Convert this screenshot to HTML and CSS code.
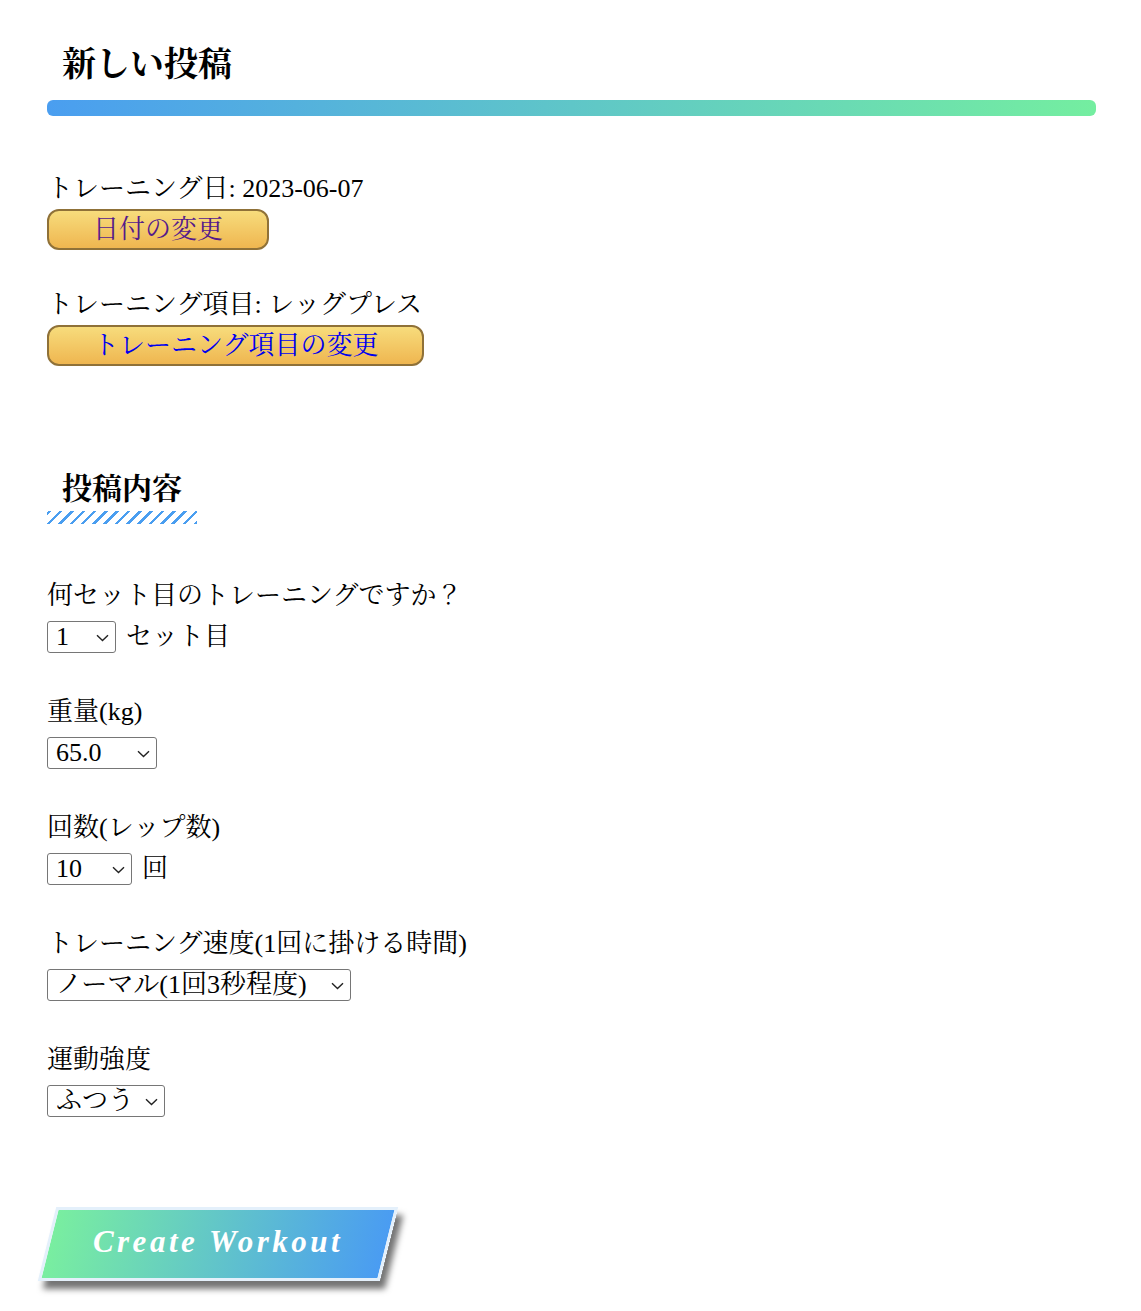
FILE: index.html
```html
<!DOCTYPE html>
<html lang="ja">
<head>
<meta charset="utf-8">
<title>新しい投稿</title>
<link rel="stylesheet" href="styles.css">
</head>
<body>
<main class="page">
  <h1 class="title">新しい投稿</h1>
  <div class="title-bar"></div>

  <section class="info">
    <div class="info-item">
      <div class="info-label">トレーニング日: 2023-06-07</div>
      <a class="pill pill-visited" href="#">日付の変更</a>
    </div>
    <div class="info-item">
      <div class="info-label">トレーニング項目: レッグプレス</div>
      <a class="pill pill-link" href="#">トレーニング項目の変更</a>
    </div>
  </section>

  <h2 class="subtitle">投稿内容</h2>
  <div class="stripes"></div>

  <form class="form">
    <div class="group">
      <div class="label">何セット目のトレーニングですか？</div>
      <div class="row">
        <span class="sel-wrap">
          <select class="sel sel-set"><option>1</option></select>
          <svg class="chev" width="13" height="8" viewBox="0 0 13 8"><path d="M1 1.2 L6.5 6.5 L12 1.2" fill="none" stroke="#222" stroke-width="1.4"/></svg>
        </span>
        <span class="unit">セット目</span>
      </div>
    </div>
    <div class="group">
      <div class="label">重量(kg)</div>
      <div class="row">
        <span class="sel-wrap">
          <select class="sel sel-weight"><option>65.0</option></select>
          <svg class="chev" width="13" height="8" viewBox="0 0 13 8"><path d="M1 1.2 L6.5 6.5 L12 1.2" fill="none" stroke="#222" stroke-width="1.4"/></svg>
        </span>
      </div>
    </div>
    <div class="group">
      <div class="label">回数(レップ数)</div>
      <div class="row">
        <span class="sel-wrap">
          <select class="sel sel-reps"><option>10</option></select>
          <svg class="chev" width="13" height="8" viewBox="0 0 13 8"><path d="M1 1.2 L6.5 6.5 L12 1.2" fill="none" stroke="#222" stroke-width="1.4"/></svg>
        </span>
        <span class="unit">回</span>
      </div>
    </div>
    <div class="group">
      <div class="label">トレーニング速度(1回に掛ける時間)</div>
      <div class="row">
        <span class="sel-wrap">
          <select class="sel sel-speed"><option>ノーマル(1回3秒程度)</option></select>
          <svg class="chev" width="13" height="8" viewBox="0 0 13 8"><path d="M1 1.2 L6.5 6.5 L12 1.2" fill="none" stroke="#222" stroke-width="1.4"/></svg>
        </span>
      </div>
    </div>
    <div class="group">
      <div class="label">運動強度</div>
      <div class="row">
        <span class="sel-wrap">
          <select class="sel sel-intensity"><option>ふつう</option></select>
          <svg class="chev" width="13" height="8" viewBox="0 0 13 8"><path d="M1 1.2 L6.5 6.5 L12 1.2" fill="none" stroke="#222" stroke-width="1.4"/></svg>
        </span>
      </div>
    </div>

    <button type="button" class="create"><span class="create-text">Create Workout</span></button>
  </form>
</main>
</body>
</html>
```
FILE: styles.css
```css
html, body {
  margin: 0;
  padding: 0;
  background: #ffffff;
}

body {
  font-family: "Liberation Serif", "Noto Serif CJK JP", "Noto Sans CJK JP", serif;
  color: #000;
}

.page {
  padding: 45px 45px 40px 47px;
  display: flex;
  flex-direction: column;
  align-items: flex-start;
}

.title {
  margin: 0;
  padding-left: 15px;
  font-size: 34px;
  line-height: 40px;
  font-weight: bold;
}

.title-bar {
  align-self: stretch;
  margin-top: 15px;
  height: 16px;
  border-radius: 6px;
  background: linear-gradient(to right, #4a9ef0, #74eea0);
}

.info {
  margin-top: 58px;
  display: flex;
  flex-direction: column;
  gap: 40px;
}

.info-item {
  display: flex;
  flex-direction: column;
  align-items: flex-start;
  gap: 5px;
}

.info-label {
  font-size: 26px;
  line-height: 30px;
}

.pill {
  display: inline-block;
  box-sizing: border-box;
  height: 41px;
  line-height: 37px;
  padding: 0 44px 0 44px;
  font-size: 26px;
  text-decoration: none;
  border: 2px solid #8f7138;
  border-radius: 12px;
  background: linear-gradient(to bottom, #f7dc7c, #efb650);
}

.pill-visited { color: #551a8b; }
.pill-link { color: #0000ee; }

.subtitle {
  margin: 105px 0 0;
  padding-left: 15px;
  font-size: 30px;
  line-height: 36px;
  font-weight: bold;
}

.stripes {
  margin-top: 4px;
  width: 150px;
  height: 13px;
  background: repeating-linear-gradient(-45deg, #4a9ef0 0 2.5px, transparent 2.5px 8px);
}

.form {
  margin-top: 57px;
  display: flex;
  flex-direction: column;
  align-items: flex-start;
}

.group {
  display: flex;
  flex-direction: column;
  align-items: flex-start;
  gap: 10px;
  margin-bottom: 44px;
}

.label {
  font-size: 26px;
  line-height: 30px;
}

.row {
  display: flex;
  align-items: center;
  gap: 10px;
  height: 32px;
}

.unit {
  font-size: 26px;
  line-height: 30px;
}

.sel-wrap {
  position: relative;
  display: inline-block;
  height: 32px;
}

.sel {
  -webkit-appearance: none;
  appearance: none;
  box-sizing: border-box;
  font-family: "Liberation Serif", "Noto Serif CJK JP", serif;
  font-size: 26px;
  line-height: 30px;
  height: 32px;
  padding: 0 0 0 8px;
  border: 1px solid #767676;
  border-radius: 3px;
  background-color: #fff;
  color: #000;
  display: block;
}

.sel-set { width: 69px; }
.sel-weight { width: 110px; }
.sel-reps { width: 85px; }
.sel-speed { width: 304px; }
.sel-intensity { width: 118px; }

.chev {
  position: absolute;
  right: 7px;
  top: 13px;
  pointer-events: none;
}

.create {
  position: relative;
  margin-top: 46px;
  width: 342px;
  height: 74px;
  padding: 0;
  border: none;
  background: transparent;
  cursor: pointer;
}

.create::before {
  content: "";
  position: absolute;
  inset: 0;
  transform: skewX(-14deg);
  background: linear-gradient(to right, #79eea0, #4a9cf2);
  border: 3px solid #e4f0fb;
  box-shadow: 7px 8px 6px rgba(0, 0, 0, 0.55);
}

.create-text {
  position: relative;
  top: -2px;
  font-family: "Liberation Serif", serif;
  font-style: italic;
  font-weight: bold;
  font-size: 31px;
  letter-spacing: 3.5px;
  color: #ffffff;
}
```
